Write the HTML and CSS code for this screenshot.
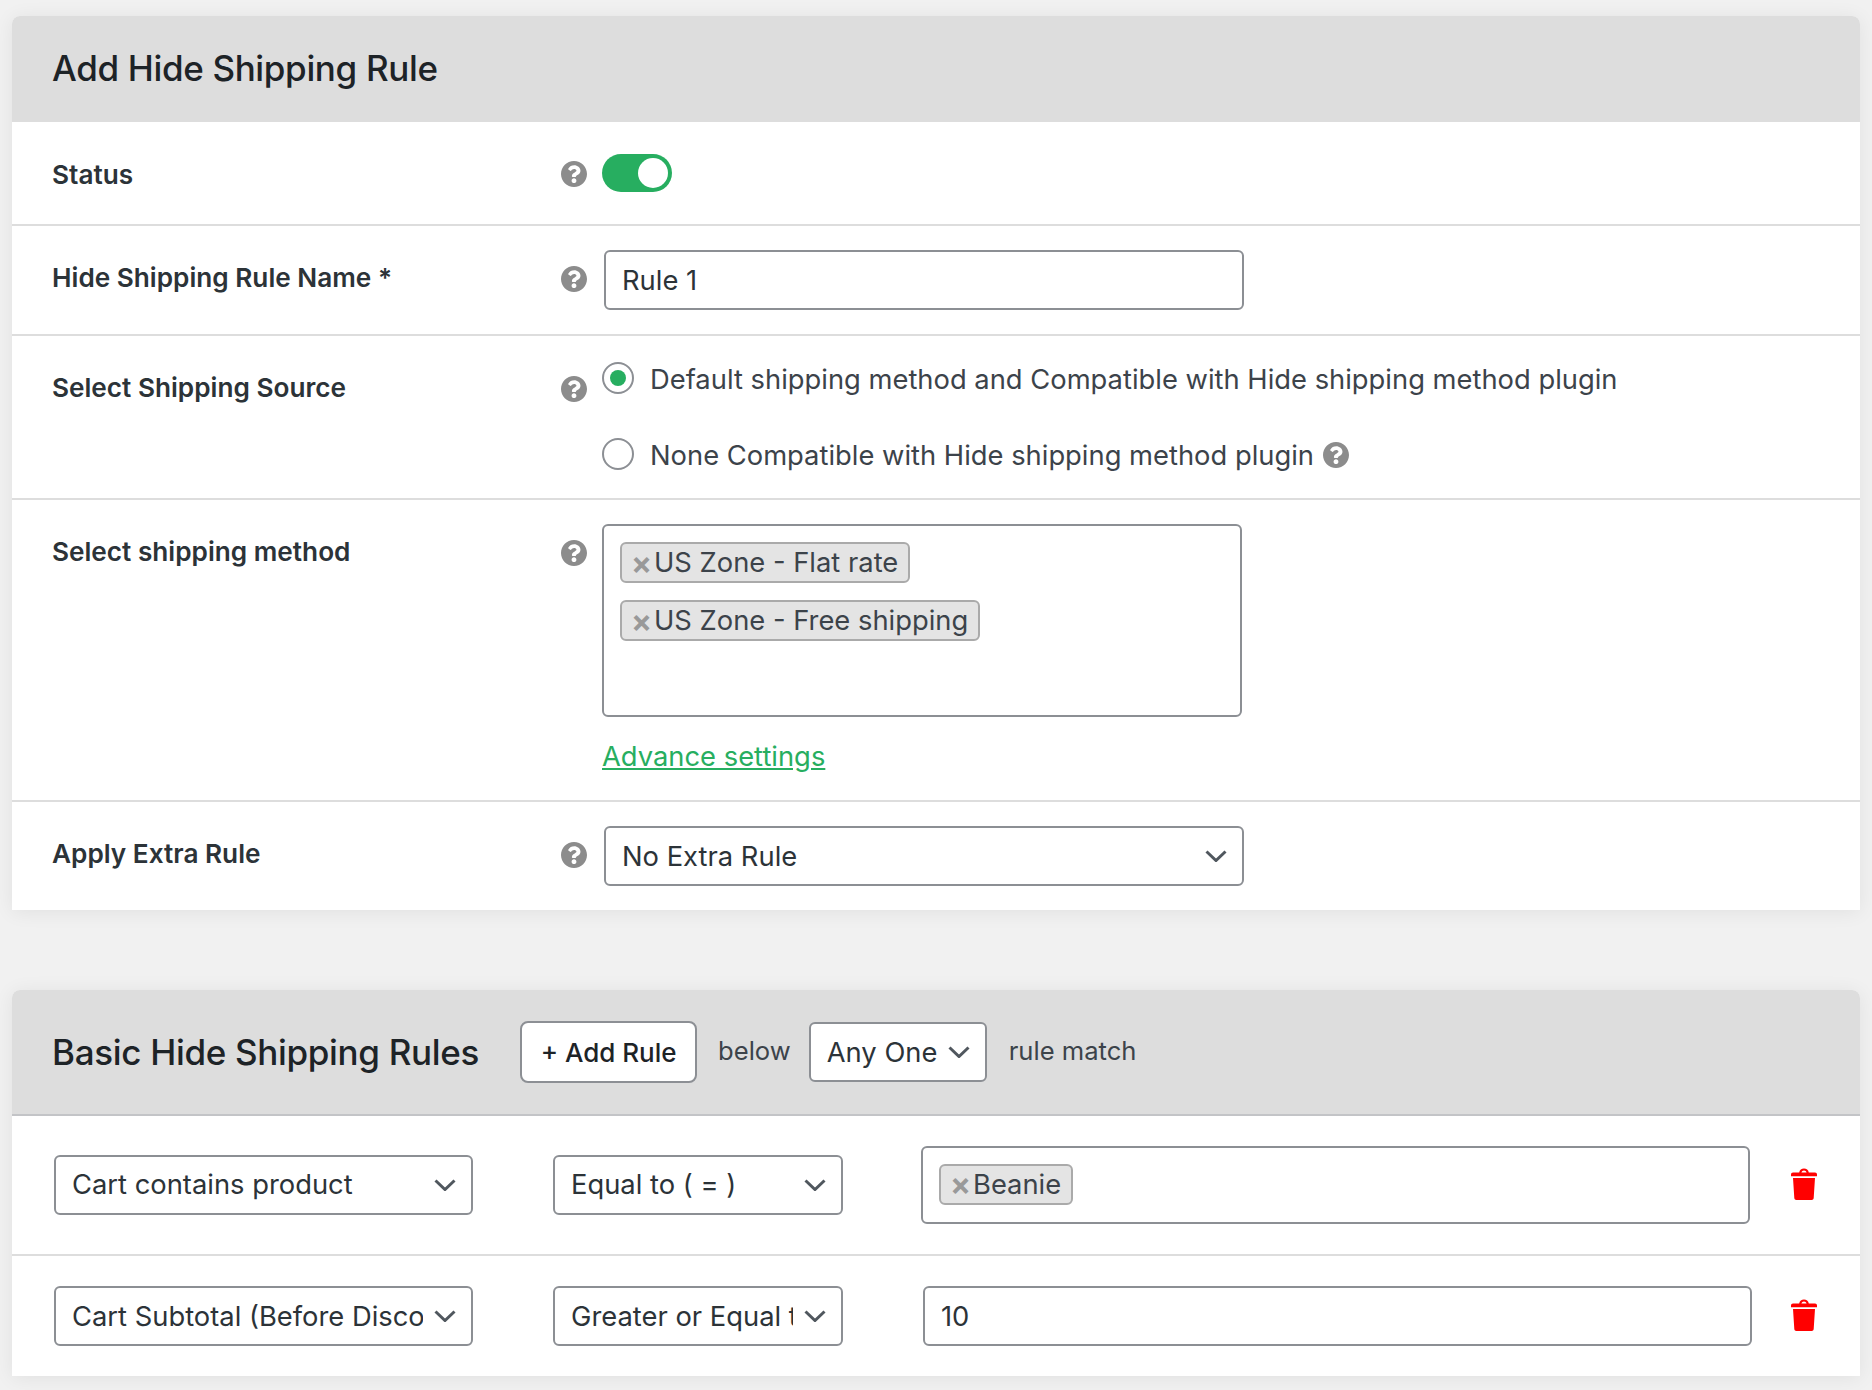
FILE: index.html
```html
<!DOCTYPE html>
<html lang="en">
<head>
<meta charset="utf-8">
<title>Add Hide Shipping Rule</title>
<link rel="stylesheet" href="styles.css">
</head>
<body>
<svg class="sprites" aria-hidden="true">
  <symbol id="help" viewBox="8 8 496 496"><path d="M504 256c0 136.997-111.043 248-248 248S8 392.997 8 256C8 119.083 119.043 8 256 8s248 111.083 248 248zM262.655 90c-54.497 0-89.255 22.957-116.549 63.758-3.536 5.286-2.353 12.415 2.715 16.258l34.699 26.31c5.205 3.947 12.621 3.008 16.665-2.122 17.864-22.658 30.113-35.797 57.303-35.797 20.429 0 45.698 13.148 45.698 32.958 0 14.976-12.363 22.667-32.534 33.976C247.128 238.528 216 254.941 216 296v4c0 6.627 5.373 12 12 12h56c6.627 0 12-5.373 12-12v-1.333c0-28.462 83.186-29.647 83.186-106.667 0-58.002-60.165-102-116.531-102zM256 338c-25.365 0-46 20.635-46 46 0 25.364 20.635 46 46 46s46-20.636 46-46c0-25.365-20.635-46-46-46z"/></symbol>
  <symbol id="chev" viewBox="0 0 22 12"><path d="M1.5 1.5 11 10.5 20.500 1.500" fill="none" stroke="currentColor" stroke-width="3"/></symbol>
  <symbol id="trash" viewBox="0 0 26 32"><path d="M8.2 4.600C8.600 1.800 10.600.4 13 .4s4.400 1.400 4.800 4.200h-2.200C15.200 3.200 14.300 2.400 13 2.400s-2.200.8-2.600 2.200zM2 4.400h22c1.200 0 2 .9 2 2v1.800H0V6.400c0-1.100.8-2 2-2zM2 10h22l-1.300 20c-.1 1.200-.9 2-2 2H5.300c-1.100 0-1.900-.8-2-2z"/></symbol>
</svg>
<main class="page">
  <section class="card">
    <header class="card-head"><h2 class="title">Add Hide Shipping Rule</h2></header>
    <div class="row row-status">
      <label class="label">Status</label>
      <svg class="help"><use href="#help"/></svg>
      <div class="control"><span class="toggle"><span class="knob"></span></span></div>
    </div>
    <div class="row row-name">
      <label class="label">Hide Shipping Rule Name *</label>
      <svg class="help"><use href="#help"/></svg>
      <div class="control"><input class="field field-wide" type="text" value="Rule 1"></div>
    </div>
    <div class="row row-source">
      <label class="label">Select Shipping Source</label>
      <svg class="help"><use href="#help"/></svg>
      <div class="control radios">
        <div class="radio-line"><span class="radio radio-on"></span><span class="radio-text">Default shipping method and Compatible with Hide shipping method plugin</span></div>
        <div class="radio-line"><span class="radio"></span><span class="radio-text">None Compatible with Hide shipping method plugin</span><svg class="help help-inline"><use href="#help"/></svg></div>
      </div>
    </div>
    <div class="row row-method">
      <label class="label">Select shipping method</label>
      <svg class="help"><use href="#help"/></svg>
      <div class="control">
        <div class="multi multi-tall">
          <span class="chip"><span class="chip-x">×</span>US Zone - Flat rate</span>
          <span class="chip"><span class="chip-x">×</span>US Zone - Free shipping</span>
        </div>
        <a class="advance" href="#">Advance settings</a>
      </div>
    </div>
    <div class="row row-extra">
      <label class="label">Apply Extra Rule</label>
      <svg class="help"><use href="#help"/></svg>
      <div class="control">
        <div class="select-wrap select-extra">
          <select class="select"><option>No Extra Rule</option></select>
          <svg class="chev"><use href="#chev"/></svg>
        </div>
      </div>
    </div>
  </section>

  <section class="card card-rules">
    <header class="card-head rules-head">
      <h2 class="title title-rules">Basic Hide Shipping Rules</h2>
      <button class="add-btn" type="button">+ Add Rule</button>
      <span class="head-text head-below">below</span>
      <div class="select-wrap select-any">
        <select class="select"><option>Any One</option></select>
        <svg class="chev"><use href="#chev"/></svg>
      </div>
      <span class="head-text head-match">rule match</span>
    </header>
    <div class="rule rule-first">
      <div class="select-wrap select-type">
        <select class="select"><option>Cart contains product</option></select>
        <svg class="chev"><use href="#chev"/></svg>
      </div>
      <div class="select-wrap select-op">
        <select class="select"><option>Equal to ( = )</option></select>
        <svg class="chev"><use href="#chev"/></svg>
      </div>
      <div class="multi multi-value"><span class="chip"><span class="chip-x">×</span>Beanie</span></div>
      <svg class="trash"><use href="#trash"/></svg>
    </div>
    <div class="rule rule-second">
      <div class="select-wrap select-type">
        <select class="select"><option>Cart Subtotal (Before Discount)</option></select>
        <svg class="chev"><use href="#chev"/></svg>
      </div>
      <div class="select-wrap select-op">
        <select class="select"><option>Greater or Equal to ( &gt;= )</option></select>
        <svg class="chev"><use href="#chev"/></svg>
      </div>
      <input class="field field-value" type="text" value="10">
      <svg class="trash trash-second"><use href="#trash"/></svg>
    </div>
  </section>
</main>
</body>
</html>
```
FILE: styles.css
```css
* { box-sizing: border-box; }
html, body { margin: 0; padding: 0; }
body {
  background: #f1f1f1;
  color: #3c434a;
  font-family: Inter, "Open Sans", "Liberation Sans", sans-serif;
  font-size: 27.35px;
  height: 1390px;
  overflow: hidden;
}
.sprites { display: none; }
.page { padding: 16px 12px 0; }
.card {
  background: #fff;
  border-radius: 8px 8px 0 0;
  box-shadow: 0 2px 20px rgba(0,0,0,.07);
}
.card-rules { margin-top: 80px; }
.card-head {
  background: #ddd;
  border-radius: 8px 8px 0 0;
  height: 106px;
  padding: 0 40px;
  display: flex;
  align-items: center;
}
.title {
  margin: 0 0 3px;
  font-size: 35px;
  font-weight: 500;
  color: #1d2327;
  letter-spacing: -0.35px;
}
.row {
  display: grid;
  grid-template-columns: 509px 41px 1fr;
  padding-left: 40px;
  border-bottom: 2px solid #ddd;
}
.row-extra { border-bottom: 0; }
.label {
  font-size: 26.2px;
  font-weight: 600;
  line-height: 30px;
  color: #2c3338;
}
.help { width: 26px; height: 26px; fill: #8c8c8c; }
.row-status { height: 104px; padding-top: 32px; align-items: center; padding-bottom: 32px; }
.row-status .label { margin-top: 3px; }
.row-status .help { margin-top: 2px; }
.row-name { height: 110px; padding-top: 24px; padding-bottom: 24px; align-items: center; }
.row-name .label { margin-bottom: 5px; }
.row-name .help { margin-bottom: 2px; }
.row-source { height: 164px; padding-top: 26px; }
.row-source .label { margin-top: 11px; }
.row-source .help { margin-top: 14px; }
.row-method { height: 302px; padding-top: 24px; }
.row-method .label { margin-top: 13px; }
.row-method .help { margin-top: 16px; }
.row-extra { height: 108px; padding-top: 24px; }
.row-extra .label { margin-top: 13px; }
.row-extra .help { margin-top: 16px; }
.toggle {
  display: flex;
  justify-content: flex-end;
  align-items: center;
  width: 70px;
  height: 38px;
  padding-right: 4px;
  border-radius: 19px;
  background: #27ae60;
}
.knob { width: 30px; height: 30px; border-radius: 50%; background: #fff; }
.field {
  height: 60px;
  padding: 0 16px;
  border: 2px solid #8c8f94;
  border-radius: 6px;
  background: #fff;
  color: #2c3338;
  font: inherit;
  outline: 0;
}
.field-wide { width: 640px; margin-left: 2px; display: block; }
.radios { display: flex; flex-direction: column; gap: 44px; }
.radio-line { display: flex; align-items: center; height: 32px; }
.radio {
  display: flex;
  align-items: center;
  justify-content: center;
  width: 32px;
  height: 32px;
  margin-right: 16px;
  border: 2px solid #8c8f94;
  border-radius: 50%;
  background: #fff;
}
.radio-on::after {
  content: "";
  width: 16px;
  height: 16px;
  border-radius: 50%;
  background: #27ae60;
}
.radio-text { line-height: 32px; padding-top: 4px; }
.row-source .help-inline { margin: 2px 0 0 9px; }
.multi {
  border: 2px solid #8c8f94;
  border-radius: 6px;
  background: #fff;
  display: flex;
  flex-wrap: wrap;
  align-content: flex-start;
  align-items: flex-start;
}
.multi-tall {
  width: 640px;
  height: 193px;
  padding: 16px 16px 0;
  gap: 17px 16px;
  flex-direction: column;
}
.multi-value {
  width: 829px;
  height: 78px;
  padding: 16px;
}
.chip {
  display: inline-flex;
  align-items: center;
  height: 41px;
  padding: 0 10px 0 9px;
  background: #e4e4e4;
  border: 2px solid #aaa;
  border-radius: 6px;
  color: #3c434a;
  white-space: nowrap;
}
.chip-x {
  color: #999;
  font-size: 31px;
  line-height: 32px;
  font-weight: 700;
  width: 23px;
}
.advance {
  display: block;
  margin-top: 24px;
  line-height: 32px;
  color: #27ae60;
  text-decoration: underline;
}
.select-wrap { position: relative; flex: none; }
.select {
  display: block;
  width: 100%;
  height: 60px;
  padding: 0 48px 0 16px;
  appearance: none;
  -webkit-appearance: none;
  border: 2px solid #8c8f94;
  border-radius: 6px;
  background: #fff;
  color: #2c3338;
  font: inherit;
  outline: 0;
}
.chev {
  position: absolute;
  right: 17px;
  top: 24px;
  width: 22px;
  height: 12px;
  color: #50575e;
  pointer-events: none;
}
.select-extra { width: 640px; margin-left: 2px; }
.rules-head {
  height: 126px;
  border-bottom: 2px solid #c3c4c7;
}
.title-rules { margin: 0 0 1px; letter-spacing: -0.32px; }
.add-btn {
  width: 177px;
  height: 62px;
  margin-left: 41px;
  background: #fff;
  border: 2px solid #8c8f94;
  border-radius: 8px;
  color: #1d2327;
  font: inherit;
  font-size: 26px;
  font-weight: 500;
}
.head-text { color: #3c434a; font-size: 25.6px; margin-bottom: 3px; }
.head-below { margin-left: 21px; }
.select-any { width: 178px; margin-left: 18px; }
.head-match { margin-left: 22px; }
.rule {
  display: flex;
  align-items: center;
  padding: 29px 0 30px 42px;
}
.rule-first { border-bottom: 2px solid #ddd; height: 140px; }
.rule-second { padding: 30px 0 30px 42px; }
.select-type { width: 419px; }
.select-op { width: 290px; margin-left: 80px; }
.multi-value { margin-left: 78px; flex: none; }
.field-value { width: 829px; margin-left: 80px; flex: none; }
.trash { width: 26px; height: 32px; fill: #f00; margin-left: 41px; flex: none; margin-top: -2px; }
.trash-second { margin-left: 39px; }
```
